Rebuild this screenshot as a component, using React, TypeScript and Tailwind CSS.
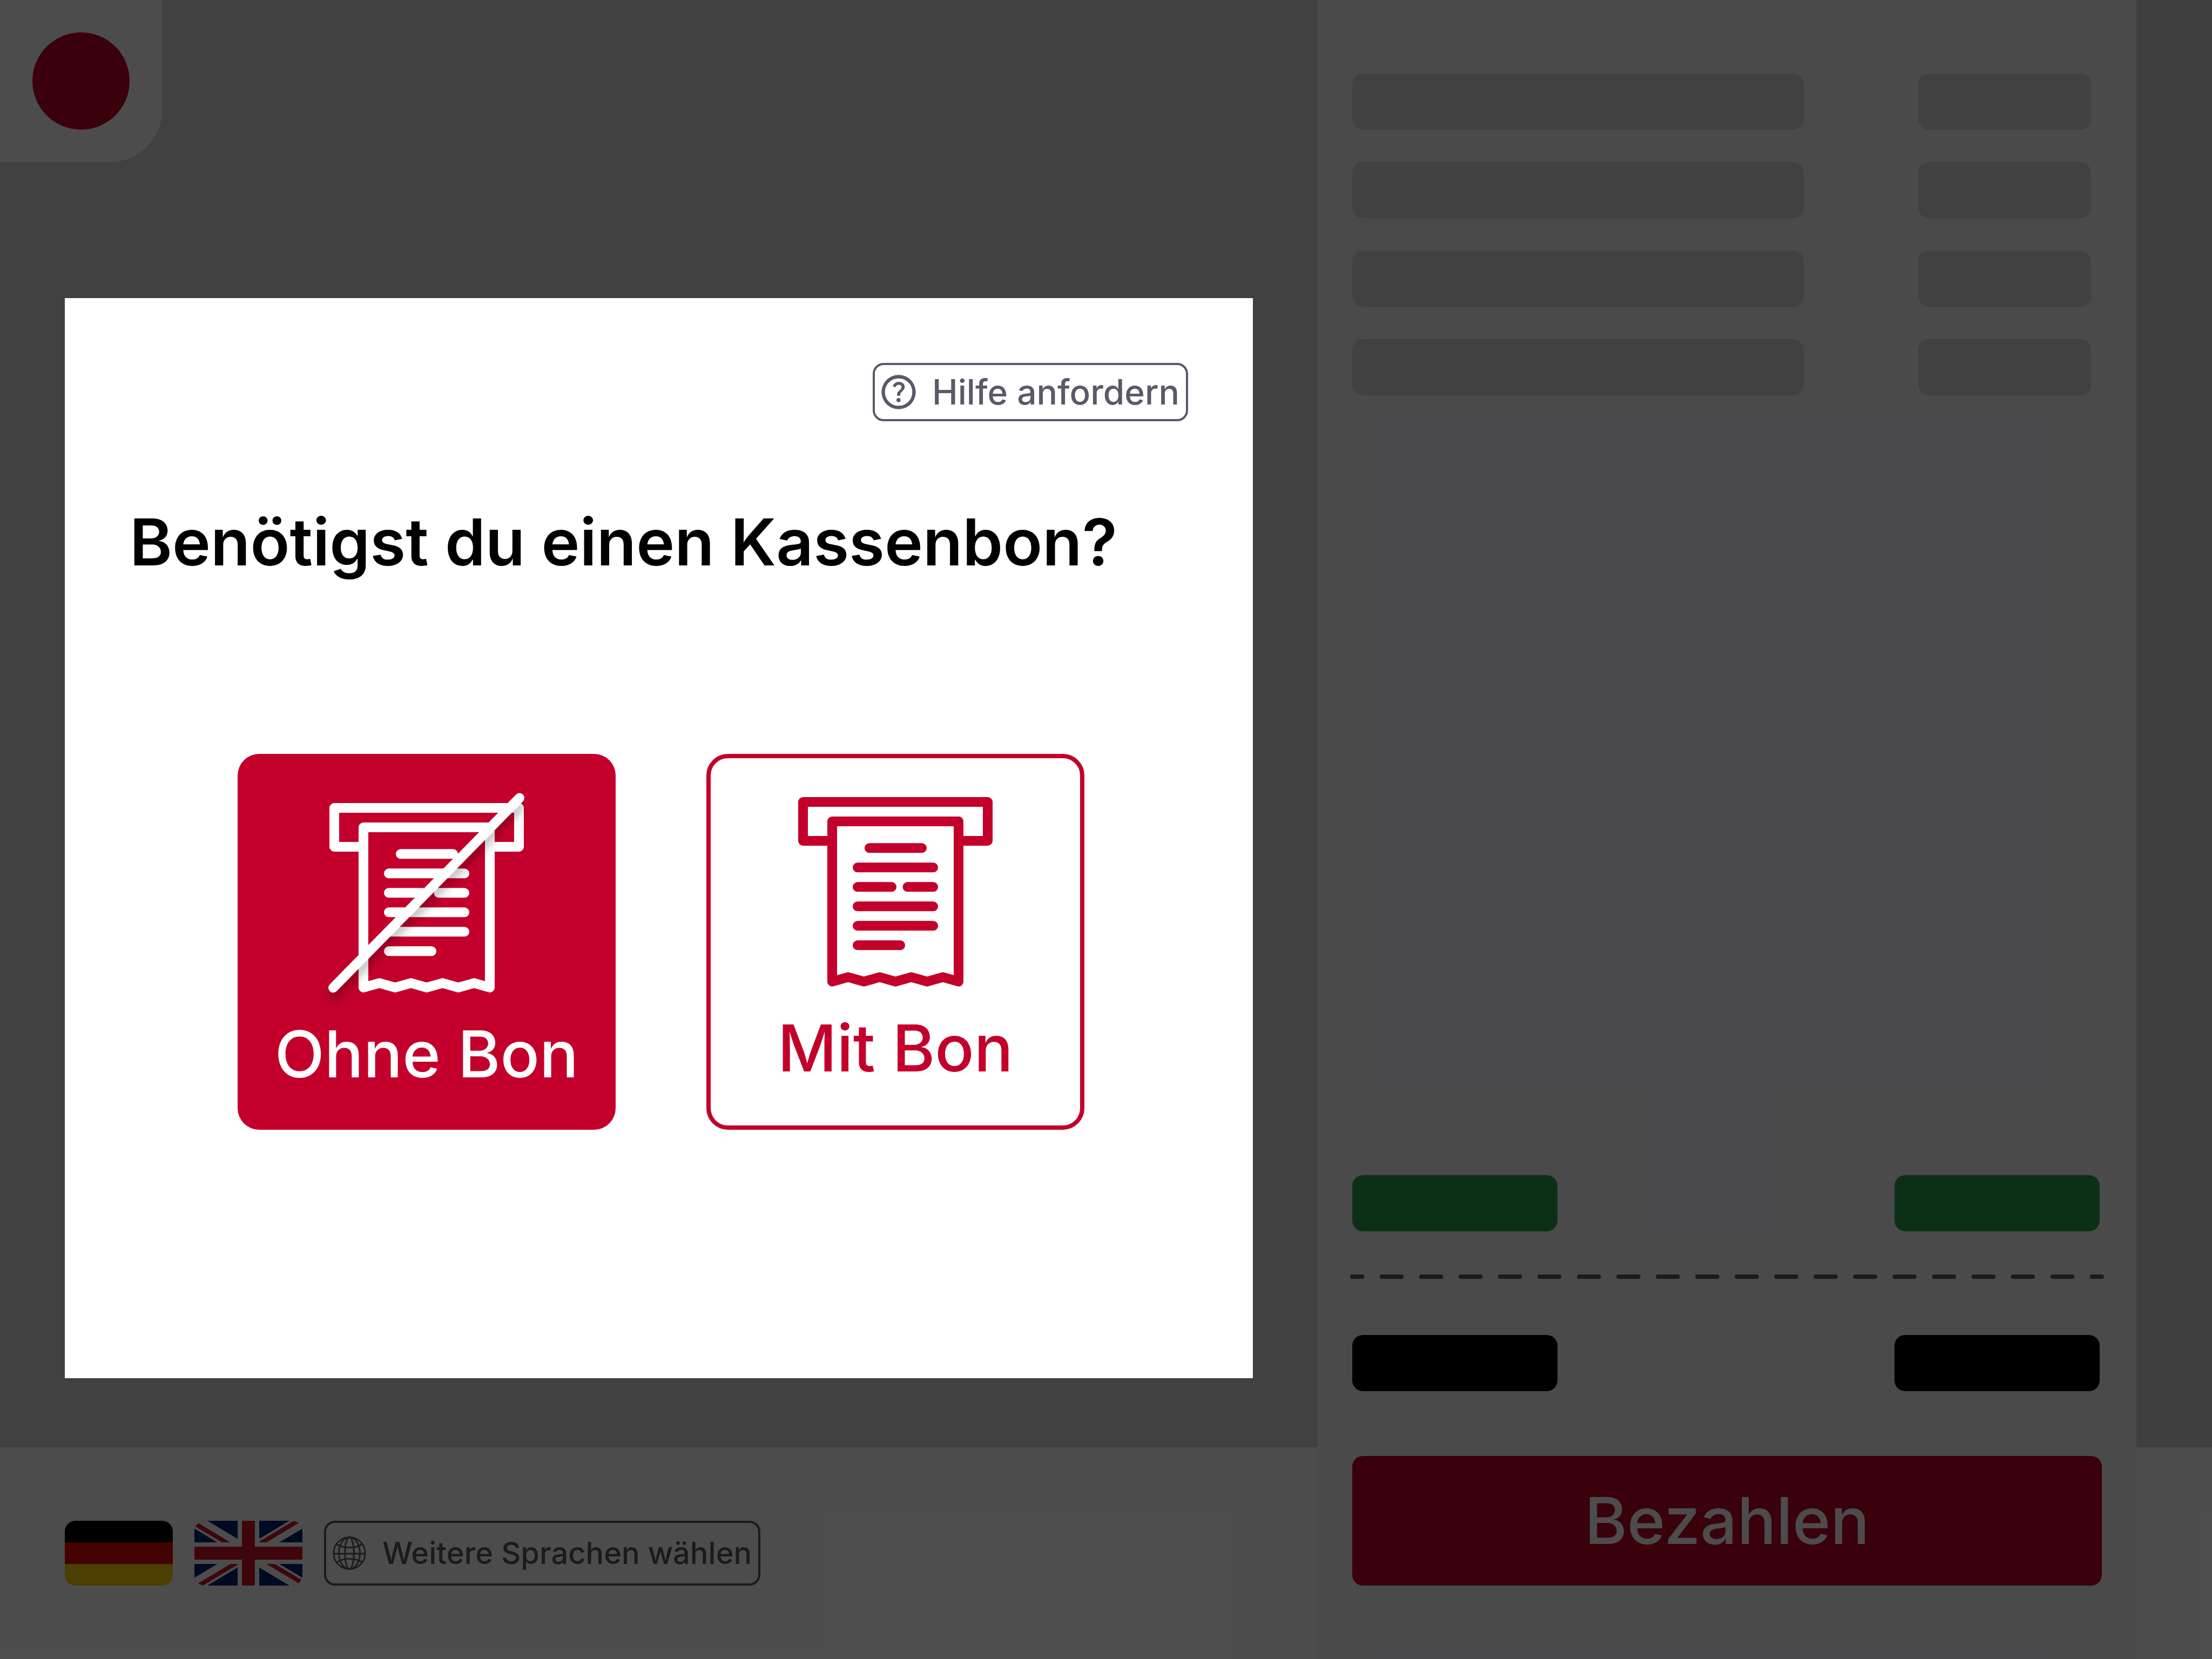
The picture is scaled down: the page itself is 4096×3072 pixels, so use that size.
import React from "react";

function HelpIcon() {
  return (
    <svg viewBox="0 -960 960 960" className="size-[76px] shrink-0" fill="currentColor" aria-hidden="true">
      <path d="M478-240q21 0 35.5-14.5T528-290q0-21-14.5-35.5T478-340q-21 0-35.5 14.5T428-290q0 21 14.5 35.5T478-240Zm-36-154h74q0-33 7.5-52t42.5-52q26-26 41-49.5t15-56.5q0-56-41-86t-97-30q-57 0-92.5 30T342-618l66 26q5-18 22.5-39t53.5-21q32 0 48 17.5t16 38.5q0 20-12 37.5T506-526q-44 39-54 59t-10 73Zm38 314q-83 0-156-31.5T197-197q-54-54-85.5-127T80-480q0-83 31.5-156T197-763q54-54 127-85.5T480-880q83 0 156 31.5T763-763q54 54 85.5 127T880-480q0 83-31.5 156T763-197q-54 54-127 85.5T480-80Zm0-80q134 0 227-93t93-227q0-134-93-227t-227-93q-134 0-227 93t-93 227q0 134 93 227t227 93Z" />
    </svg>
  );
}

function GlobeIcon() {
  return (
    <svg viewBox="0 0 62 62" className="size-[62px] shrink-0" fill="none" stroke="currentColor" strokeWidth="2.8" aria-hidden="true">
      <circle cx="31" cy="31" r="29.3" />
      <ellipse cx="31" cy="31" rx="19.5" ry="29.3" />
      <ellipse cx="31" cy="31" rx="8.3" ry="29.3" />
      <path d="M2 32H60" />
      <path d="M7.5 14.5C14 18.5 22 20.6 31 20.6S48 18.5 54.5 14.5" />
      <path d="M7.5 48C14 43.6 22 41.4 31 41.4S48 43.6 54.5 48" />
    </svg>
  );
}

function ReceiptShape() {
  return (
    <g fill="none" stroke="currentColor" strokeWidth="18" strokeLinejoin="round" strokeLinecap="round">
      <path d="M63 81H9V9H351V81H297" />
      <path d="M63 45H297V341.7L268 333.3L238.7 341.7L209.5 333.3L180 341.7L151 333.3L121.7 341.7L92.5 333.3L63 341.7Z" />
      <path d="M132 94.3H229M110 130.3H250M110 166.3H173M202.5 166.3H250M110 202.3H250M110 238.3H250M110 274.3H189" />
    </g>
  );
}

function ReceiptIcon() {
  return (
    <svg viewBox="0 0 360 351" className="h-[351px] w-[360px]" aria-hidden="true">
      <ReceiptShape />
    </svg>
  );
}

function NoReceiptIcon() {
  return (
    <svg viewBox="-2 -19 364 370" className="h-[370px] w-[364px] overflow-visible" aria-hidden="true">
      <defs>
        <filter id="slash-shadow" x="-20%" y="-20%" width="140%" height="140%">
          <feDropShadow dx="0" dy="16" stdDeviation="8" floodColor="#000" floodOpacity="0.25" />
        </filter>
      </defs>
      <ReceiptShape />
      <path d="M7 342L352 -9.5" stroke="currentColor" strokeWidth="18" strokeLinecap="round" filter="url(#slash-shadow)" />
    </svg>
  );
}

function GermanFlag() {
  return (
    <svg viewBox="0 0 200 120" className="h-[120px] w-[200px]" aria-hidden="true">
      <path fill="#000" d="M0 0H200V40H0Z" />
      <path fill="#dd0000" d="M0 40H200V80H0Z" />
      <path fill="#ffce00" d="M0 80H200V120H0Z" />
    </svg>
  );
}

function BritishFlag() {
  return (
    <svg viewBox="0 0 200 120" className="h-[120px] w-[200px]" aria-hidden="true">
      <path fill="#00247d" d="M0 0H200V120H0Z" />
      <path stroke="#fff" strokeWidth="24.7" d="M0 0L200 120M200 0L0 120" />
      <g fill="#cf142b">
        <path d="M0 0L66.7 40H51L0 9.4Z" />
        <path d="M200 0L133.3 40H117.7L184.3 0Z" />
        <path d="M200 120L133.3 80H149L200 110.6Z" />
        <path d="M0 120L66.7 80H82.3L15.7 120Z" />
      </g>
      <path fill="#fff" d="M80 0H120V40H200V80H120V120H80V80H0V40H80Z" />
      <path fill="#cf142b" d="M88 0H112V48H200V72H112V120H88V72H0V48H88Z" />
    </svg>
  );
}

const columns = "grid grid-cols-[610fr_379fr_35fr]";

function Totals({ tone }: { tone: string }) {
  return (
    <div className="flex justify-between pr-1">
      <div className={`h-[104px] w-[380px] rounded-[20px] ${tone}`} />
      <div className={`h-[104px] w-[380px] rounded-[20px] ${tone}`} />
    </div>
  );
}

function Cart() {
  return (
    <aside className="flex flex-col bg-[#f7f7fc] px-16 py-[136px]">
      <div className="flex flex-col gap-[60px] pr-5">
        {[0, 1, 2, 3].map((row) => (
          <div key={row} className="flex justify-between">
            <div className="h-[104px] w-[836px] rounded-[20px] bg-[#d9d9d9]" />
            <div className="h-[104px] w-[320px] rounded-[20px] bg-[#d9d9d9]" />
          </div>
        ))}
      </div>
      <div className="mt-auto">
        <Totals tone="bg-[#2ba24c]" />
        <svg className="mt-20 mb-[104px] block h-2 w-full overflow-visible text-[#5b5868]" aria-hidden="true">
          <line x1="0" y1="4" x2="100%" y2="4" stroke="currentColor" strokeWidth="8" strokeLinecap="round" pathLength={76} strokeDasharray="2 2" strokeDashoffset="1" />
        </svg>
        <Totals tone="bg-black" />
      </div>
      <button type="button" className="mt-[120px] h-[240px] w-full rounded-[20px] bg-[#c3002b] text-[120px] leading-[144px] font-medium text-white">
        Bezahlen
      </button>
    </aside>
  );
}

function LanguageBar() {
  return (
    <footer className="flex h-[392px] items-start gap-10 bg-white px-[120px] pt-[136px]">
      <button type="button" aria-label="Deutsch" className="overflow-hidden rounded-[20px]">
        <GermanFlag />
      </button>
      <button type="button" aria-label="English" className="overflow-hidden rounded-[20px]">
        <BritishFlag />
      </button>
      <button type="button" className="flex h-[120px] items-center gap-[30px] rounded-[20px] border-4 border-[#5b5868] px-3 text-[56px] leading-[70px] font-medium text-[#5b5868]">
        <GlobeIcon />
        Weitere Sprachen wählen
      </button>
    </footer>
  );
}

function ReceiptDialog() {
  return (
    <section role="dialog" aria-modal="true" aria-labelledby="receipt-title" className="mx-[120px] mt-[552px] flex flex-col self-start bg-white px-[120px] pt-[120px] pb-[460px]">
      <button type="button" className="flex h-[108px] items-center gap-6 self-end rounded-[20px] border-4 border-[#5b5868] pr-3 pl-1.5 text-[64px] leading-[78px] font-medium text-[#5b5868]">
        <HelpIcon />
        Hilfe anfordern
      </button>
      <h1 id="receipt-title" className="mt-[152px] text-[120px] leading-[144px] font-semibold text-black">
        Benötigst du einen Kassenbon?
      </h1>
      <div className="mt-[320px] flex justify-center gap-[168px] pl-2">
        <button type="button" className="flex h-[696px] w-[700px] flex-col items-center justify-center gap-[42px] rounded-[40px] bg-[#c3002b] pt-1 text-[120px] leading-[144px] font-medium text-white">
          <NoReceiptIcon />
          Ohne Bon
        </button>
        <button type="button" className="flex h-[696px] w-[700px] flex-col items-center justify-center gap-[42px] rounded-[40px] border-8 border-[#c3002b] bg-white text-[120px] leading-[144px] font-medium text-[#c3002b]">
          <ReceiptIcon />
          Mit Bon
        </button>
      </div>
    </section>
  );
}

export default function App() {
  return (
    <div className="relative min-h-screen bg-[#d9d9d9] font-['Inter',sans-serif]">
      <div className={`${columns} min-h-screen`}>
        <main className="flex flex-col justify-between">
          <header className="flex size-[300px] items-center justify-center rounded-br-[96px] bg-white">
            <div className="size-[180px] rounded-full bg-[#c3002b]" />
          </header>
          <LanguageBar />
        </main>
        <Cart />
        <div className="flex flex-col justify-end bg-[#d2d2d2]">
          <div className="h-[392px] bg-white" />
        </div>
      </div>
      <div className={`${columns} absolute inset-0 bg-black/70`}>
        <ReceiptDialog />
      </div>
    </div>
  );
}
